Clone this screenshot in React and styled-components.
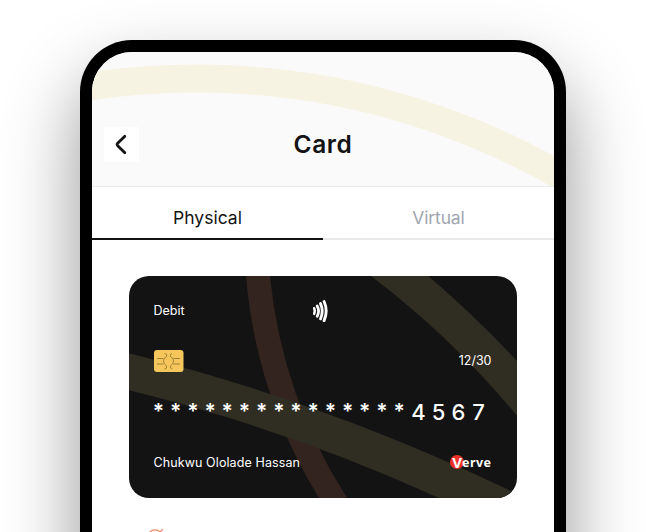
import React from "react";
import styled, { createGlobalStyle } from "styled-components";

const GlobalStyle = createGlobalStyle`
  *, *::before, *::after { box-sizing: border-box; }
  body { margin: 0; background: #fff; overflow: hidden; }
`;

const Page = styled.main`
  height: 532px;
  padding: 40px 80px 0;
  overflow: hidden;
  background: #fff;
  color: #131313;
  font-family: Inter, "Liberation Sans", sans-serif;
`;

const Phone = styled.div`
  width: 486px;
  height: 980px;
  padding: 12px;
  border-radius: 52px;
  background: #000;
  box-shadow: 0 38px 74px rgba(0, 0, 0, 0.42);
`;

const Screen = styled.div`
  height: 100%;
  border-radius: 40px;
  overflow: hidden;
  background: #fff;
`;

const Header = styled.header`
  position: relative;
  height: 135px;
  padding: 75px 12px 0;
  border-bottom: 1px solid #ebebeb;
  background: #fafafa;
  display: grid;
  grid-template-columns: 35px 1fr 35px;
  align-items: start;
`;

const Artwork = styled.svg`
  position: absolute;
  inset: 0;
  width: 100%;
  height: 100%;
`;

const BackButton = styled.button`
  position: relative;
  width: 35px;
  height: 35px;
  padding: 0;
  border: 0;
  border-radius: 2px;
  background: #fff;
  display: grid;
  place-items: center;
`;

const Title = styled.h1`
  position: relative;
  margin: 0;
  line-height: 35px;
  text-align: center;
  font-size: 24.5px;
  font-weight: 600;
  letter-spacing: 0.6px;
`;

const Tabs = styled.nav`
  display: grid;
  grid-template-columns: 1fr 1fr;
`;

const Tab = styled.button`
  height: 53px;
  padding: 9px 0 0;
  border: 0;
  border-bottom: 2px solid ${(p) => (p.$active ? "#131313" : "#e8e8e8")};
  background: none;
  color: ${(p) => (p.$active ? "#131313" : "#a0a5b1")};
  font: 400 17.5px Inter, sans-serif;
  letter-spacing: ${(p) => p.$tracking};
`;

const BankCard = styled.section`
  position: relative;
  height: 222px;
  margin: 36px 37px 0;
  padding: 24px 25.5px 24px 24.5px;
  border-radius: 20px;
  overflow: hidden;
  background: #131313;
  color: #fff;
`;

const CardRow = styled.div`
  position: relative;
  display: flex;
  align-items: center;
  justify-content: space-between;
  height: ${(p) => p.$height};
  margin-top: ${(p) => p.$gap || "0"};
`;

const TopRow = styled(CardRow)`
  display: grid;
  grid-template-columns: 158px 1fr;
`;

const Label = styled.span`
  font-size: 12.5px;
  font-weight: 400;
  line-height: 20px;
  letter-spacing: ${(p) => p.$tracking || "0"};
`;

const Digits = styled.div`
  position: relative;
  display: flex;
  align-items: center;
  height: 30px;
  margin-top: 24px;
  font-size: 22px;
  line-height: 30px;
`;

const Mask = styled.span`
  width: 17.2px;
  padding: 0 7.2px 0 0;
  display: flex;
  justify-content: center;
  font-size: 21px;
  font-weight: 600;
`;

const Digit = styled.span`
  width: 20.2px;
  padding-right: 6px;
  display: flex;
  justify-content: center;
  font-weight: 450;
`;

const VerveMark = styled.div`
  position: relative;
  display: flex;
  align-items: center;
  justify-content: flex-end;
  line-height: 14px;
  font-family: "Noto Sans", sans-serif;
  font-size: 12.5px;
  font-weight: 700;
  letter-spacing: 0.45px;
`;

const Initial = styled.span`
  display: grid;
  place-items: center;
  width: 14px;
  height: 14px;
  margin: -2px -2px 0 0;
  border-radius: 50%;
  background: #ee312a;
  font-size: 15px;
  letter-spacing: 0;
`;

const Actions = styled.div`
  display: flex;
  padding: 30px 56px 0;
`;

export default function App() {
  return (
    <>
      <GlobalStyle />
      <Page>
        <Phone>
          <Screen>
            <Header>
              <Artwork viewBox="0 0 462 134" preserveAspectRatio="none" aria-hidden="true">
                <circle cx="105" cy="754.5" r="728" fill="none" stroke="#f7f3e2" strokeWidth="28" />
              </Artwork>
              <BackButton aria-label="Back">
                <svg width="35" height="35" viewBox="0 0 35 35" fill="none" stroke="#131313" strokeWidth="2.8" strokeLinecap="round" strokeLinejoin="round">
                  <path d="M20.8 9.2 13.7 16.3Q12.6 17.5 13.7 18.7L20.8 25.8" />
                </svg>
              </BackButton>
              <Title>Card</Title>
            </Header>
            <Tabs>
              <Tab $active $tracking="0">Physical</Tab>
              <Tab $tracking="-0.15px">Virtual</Tab>
            </Tabs>
            <BankCard>
              <Artwork viewBox="129 276 388 222" aria-hidden="true">
                <path fill="#33241f" d="M246 276A502 502 0 0 0 319 498H347A503 503 0 0 1 270 276Z" />
                <path fill="#302d23" d="M129 353.3A1980 1980 0 0 1 511 491L525 498H439A1746 1746 0 0 0 129 390.3Z" />
                <path fill="#302d23" d="M371 276A895 895 0 0 1 517 415.7V361A1100 1100 0 0 0 428.3 276Z" />
              </Artwork>
              <TopRow $height="22px">
                <Label>Debit</Label>
                <svg width="17" height="22" viewBox="0 1.2 17 22" fill="none" stroke="#fff" strokeLinecap="round">
                  <path d="M2.2 9.5Q3.4 12.3 2.2 15" strokeWidth="2.6" />
                  <path d="M5.2 7.2Q8 12.3 5.2 17.5" strokeWidth="2.8" />
                  <path d="M8.5 4.8Q12 12.3 8.5 20" strokeWidth="2.9" />
                  <path d="M12.1 2.7Q16.3 12.3 12.1 21.8" strokeWidth="2.9" />
                </svg>
              </TopRow>
              <CardRow $height="24px" $gap="27px">
                <svg width="30" height="24" viewBox="0.5 0 30 24" fill="none">
                  <rect x=".5" y="1" width="29.5" height="22" rx="3" fill="#f5c65b" />
                  <g stroke="#8e7132" strokeWidth=".8">
                    <path d="M3.5 9.5H10M3.5 15H10M20 9.5H26.5M20 15H26.5M11 4.5Q14 4.5 13.2 7.5Q10 9 10 12Q10 15 13 16.8Q14 19.5 11 20M18.5 4.5Q16 5 16.8 7.5Q20 9 20 12Q20 15 17 16.8Q16 19 18.8 20" />
                  </g>
                </svg>
                <Label>12/30</Label>
              </CardRow>
              <Digits>
                {Array.from({ length: 15 }, (_, i) => (
                  <Mask key={i}>*</Mask>
                ))}
                {["4", "5", "6", "7"].map((digit) => (
                  <Digit key={digit}>{digit}</Digit>
                ))}
              </Digits>
              <CardRow $height="20px" $gap="26px">
                <Label $tracking="0.1px">Chukwu Ololade Hassan</Label>
                <VerveMark>
                  <Initial>V</Initial>erve
                </VerveMark>
              </CardRow>
            </BankCard>
            <Actions>
              <svg width="20" height="20" viewBox="0 0 20 20" fill="none" stroke="#f18a68" strokeWidth="1.2" strokeLinecap="round">
                <circle cx="7" cy="9" r="7.2" />
                <path d="m14.5 1.5-8 8" />
              </svg>
            </Actions>
          </Screen>
        </Phone>
      </Page>
    </>
  );
}
